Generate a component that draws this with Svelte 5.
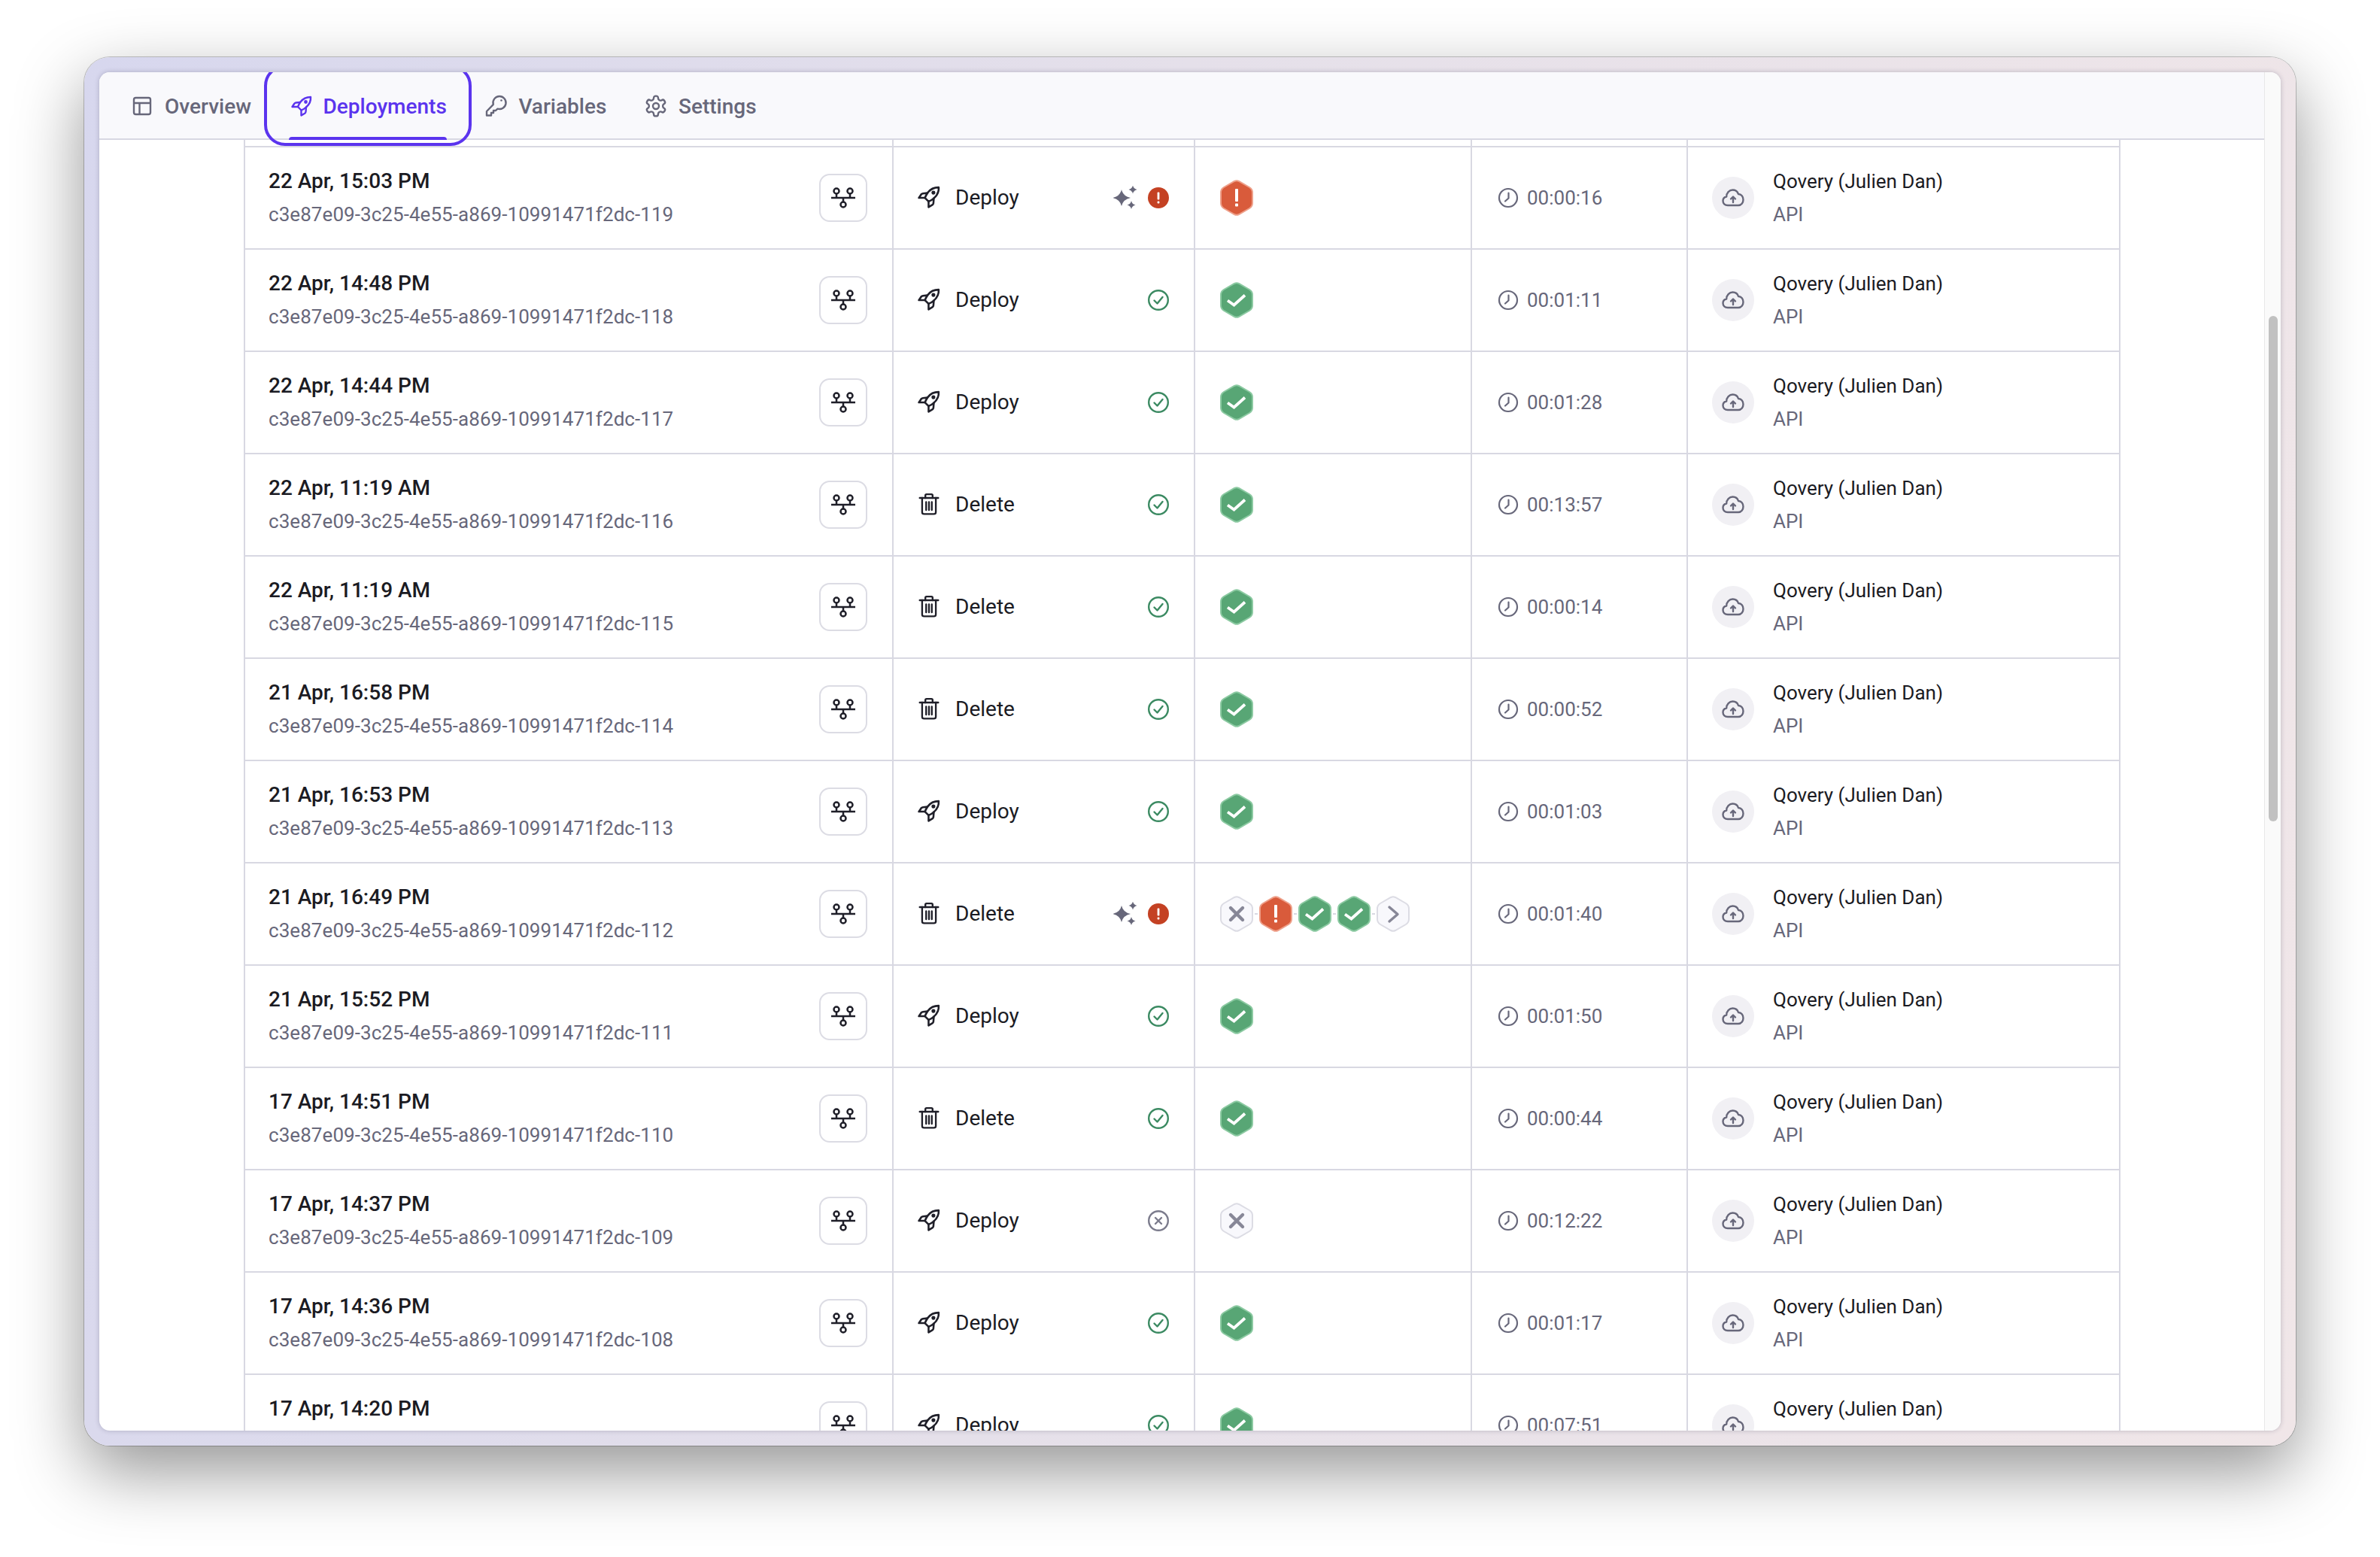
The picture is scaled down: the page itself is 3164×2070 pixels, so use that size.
<script>
  const ID = 'c3e87e09-3c25-4e55-a869-10991471f2dc-';

  const rows = [
    { date: '22 Apr, 15:03 PM', n: 119, action: 'Deploy', status: 'error', time: '00:00:16', ai: true, stages: ['error'] },
    { date: '22 Apr, 14:48 PM', n: 118, action: 'Deploy', status: 'ok', time: '00:01:11', stages: ['ok'] },
    { date: '22 Apr, 14:44 PM', n: 117, action: 'Deploy', status: 'ok', time: '00:01:28', stages: ['ok'] },
    { date: '22 Apr, 11:19 AM', n: 116, action: 'Delete', status: 'ok', time: '00:13:57', stages: ['ok'] },
    { date: '22 Apr, 11:19 AM', n: 115, action: 'Delete', status: 'ok', time: '00:00:14', stages: ['ok'] },
    { date: '21 Apr, 16:58 PM', n: 114, action: 'Delete', status: 'ok', time: '00:00:52', stages: ['ok'] },
    { date: '21 Apr, 16:53 PM', n: 113, action: 'Deploy', status: 'ok', time: '00:01:03', stages: ['ok'] },
    { date: '21 Apr, 16:49 PM', n: 112, action: 'Delete', status: 'error', time: '00:01:40', ai: true, stages: ['cancel', 'error', 'ok', 'ok', 'more'] },
    { date: '21 Apr, 15:52 PM', n: 111, action: 'Deploy', status: 'ok', time: '00:01:50', stages: ['ok'] },
    { date: '17 Apr, 14:51 PM', n: 110, action: 'Delete', status: 'ok', time: '00:00:44', stages: ['ok'] },
    { date: '17 Apr, 14:37 PM', n: 109, action: 'Deploy', status: 'cancel', time: '00:12:22', stages: ['cancel'] },
    { date: '17 Apr, 14:36 PM', n: 108, action: 'Deploy', status: 'ok', time: '00:01:17', stages: ['ok'] },
    { date: '17 Apr, 14:20 PM', n: 107, action: 'Deploy', status: 'ok', time: '00:07:51', stages: ['ok'] }
  ];

  const HEX = 'M19 2 Q22 .5 25 2 L39 10 Q43 12.5 43 17 L43 31 Q43 35.5 39 38 L25 46 Q22 47.5 19 46 L5 38 Q1 35.5 1 31 L1 17 Q1 12.5 5 10 Z';
</script>

{#snippet rocket()}
  <svg class="ico" width="30" height="30" viewBox="0 0 28 28" fill="none" stroke="currentColor" stroke-width="2.4" stroke-linejoin="round" stroke-linecap="round">
    <path d="M26 2 C20.5 2 15.5 4.5 12.5 8.5 C11 10.5 10 12.5 9 15 L13.5 19.5 C16 18.5 18.5 17 20 15.5 C24 12 26.5 7.5 26 2 Z" />
    <path d="M12 9 L6.5 9.5 C5.5 9.6 5 10 4.5 10.5 L1.5 15 L9 15" />
    <path d="M20 15.5 L19.5 21.5 C19.4 22.5 19 23 18.5 23.5 L13.5 26.5 L13.5 19.5" />
    <circle cx="19.5" cy="8.5" r="1.2" fill="currentColor" />
  </svg>
{/snippet}

{#snippet trash()}
  <svg class="ico" width="30" height="30" viewBox="0 0 28 28" fill="none" stroke="currentColor" stroke-width="2.2" stroke-linecap="round" stroke-linejoin="round">
    <path d="M2.5 6.5 H25.5" />
    <path d="M9.5 6.5 V3.5 a1.5 1.5 0 0 1 1.5 -1.5 h6 a1.5 1.5 0 0 1 1.5 1.5 V6.5" />
    <path d="M5.5 6.5 V24 a2.5 2.5 0 0 0 2.5 2.5 h12 a2.5 2.5 0 0 0 2.5 -2.5 V6.5" />
    <path d="M10.5 11.5 V21.5 M14 11.5 V21.5 M17.5 11.5 V21.5" />
  </svg>
{/snippet}

{#snippet status(kind)}
  <svg width="28" height="28" viewBox="0 0 28 28" fill="none">
    {#if kind === 'error'}
      <circle cx="14" cy="14" r="14" fill="#c44123" />
      <rect x="12.6" y="6.5" width="2.8" height="10" rx="1" fill="#fff" />
      <rect x="12.6" y="18.5" width="2.8" height="3" rx="1" fill="#fff" />
    {:else if kind === 'ok'}
      <circle cx="14" cy="14" r="12.8" stroke="#3b8a62" stroke-width="2.4" />
      <path d="M8.5 14.5 L12.5 18.5 L19.5 10" stroke="#3b8a62" stroke-width="2.4" stroke-linecap="round" stroke-linejoin="round" />
    {:else}
      <circle cx="14" cy="14" r="12.8" stroke="#7b7b8c" stroke-width="2.4" />
      <path d="M10 10 L18 18 M18 10 L10 18" stroke="#7b7b8c" stroke-width="2.4" stroke-linecap="round" />
    {/if}
  </svg>
{/snippet}

{#snippet hex(kind)}
  <svg width="44" height="48" viewBox="0 0 44 48" fill="none">
    {#if kind === 'ok'}
      <path d={HEX} fill="#58a675" stroke="#8ccaa2" stroke-width="2" />
      <path d="M10 24.5 L18.5 30.5 L33 17.5" stroke="#fff" stroke-width="3.8" />
    {:else if kind === 'error'}
      <path d={HEX} fill="#d95b3b" stroke="#eea08a" stroke-width="2" />
      <rect x="20" y="12" width="4" height="17" rx="1" fill="#fff" />
      <rect x="20" y="31.5" width="4" height="4" rx="1" fill="#fff" />
    {:else if kind === 'cancel'}
      <path d={HEX} fill="#f8f8fc" stroke="#dcdce4" stroke-width="2" />
      <path d="M14 16 L30 32 M30 16 L14 32" stroke="#878797" stroke-width="4.4" stroke-linecap="round" />
    {:else}
      <path d={HEX} fill="#f8f8fc" stroke="#dcdce4" stroke-width="2" />
      <path d="M17 15 L28 24.5 L17 34" stroke="#878797" stroke-width="3.4" stroke-linecap="round" stroke-linejoin="round" />
    {/if}
  </svg>
{/snippet}

<div class="stage">
  <div class="frame">
    <div class="window">
      <div class="main">
        <nav class="tabs">
          <div class="tab">
            <svg width="32" height="32" viewBox="0 0 32 32" fill="none" stroke="currentColor" stroke-width="2.4">
              <rect x="5" y="5" width="22" height="22" rx="2.5" />
              <path d="M5 12 H27 M12.5 12 V27" />
            </svg>
            Overview
          </div>
          <div class="tab active">
            <svg width="32" height="32" viewBox="-3 -2 32 32" fill="none" stroke="currentColor" stroke-width="2.4" stroke-linejoin="round" stroke-linecap="round">
              <path d="M26 2 C20.5 2 15.5 4.5 12.5 8.5 C11 10.5 10 12.5 9 15 L13.5 19.5 C16 18.5 18.5 17 20 15.5 C24 12 26.5 7.5 26 2 Z" />
              <path d="M12 9 L6.5 9.5 C5.5 9.6 5 10 4.5 10.5 L1.5 15 L9 15" />
              <path d="M20 15.5 L19.5 21.5 C19.4 22.5 19 23 18.5 23.5 L13.5 26.5 L13.5 19.5" />
              <circle cx="19.5" cy="8.5" r="1.2" fill="currentColor" />
            </svg>
            Deployments
          </div>
          <div class="tab">
            <svg width="32" height="32" viewBox="0 0 32 32" fill="none" stroke="currentColor" stroke-width="2.4" stroke-linejoin="round">
              <path d="M21 3 a8.5 8.5 0 1 1 -2.5 16.6 L16 22 H13 V25 H10 V28.5 H4 V23 L12.8 13.8 A8.5 8.5 0 0 1 21 3 Z" />
              <circle cx="23.5" cy="8.5" r="1.3" fill="currentColor" stroke="none" />
            </svg>
            Variables
          </div>
          <div class="tab">
            <svg width="32" height="32" viewBox="0 0 24 24" fill="none" stroke="currentColor" stroke-width="1.8" stroke-linejoin="round">
              <path d="M12.22 2h-.44a2 2 0 0 0-2 2v.18a2 2 0 0 1-1 1.73l-.43.25a2 2 0 0 1-2 0l-.15-.08a2 2 0 0 0-2.73.73l-.22.38a2 2 0 0 0 .73 2.73l.15.1a2 2 0 0 1 1 1.72v.51a2 2 0 0 1-1 1.74l-.15.09a2 2 0 0 0-.73 2.73l.22.38a2 2 0 0 0 2.73.73l.15-.08a2 2 0 0 1 2 0l.43.25a2 2 0 0 1 1 1.73V20a2 2 0 0 0 2 2h.44a2 2 0 0 0 2-2v-.18a2 2 0 0 1 1-1.73l.43-.25a2 2 0 0 1 2 0l.15.08a2 2 0 0 0 2.73-.73l.22-.39a2 2 0 0 0-.73-2.73l-.15-.08a2 2 0 0 1-1-1.74v-.5a2 2 0 0 1 1-1.74l.15-.09a2 2 0 0 0 .73-2.73l-.22-.38a2 2 0 0 0-2.73-.73l-.15.08a2 2 0 0 1-2 0l-.43-.25a2 2 0 0 1-1-1.73V4a2 2 0 0 0-2-2z" />
              <circle cx="12" cy="12" r="3" />
            </svg>
            Settings
          </div>
        </nav>

        <div class="content">
          <div class="table">
            <div class="row stub">
              <div class="cell"></div>
              <div class="cell"></div>
              <div class="cell"></div>
              <div class="cell"></div>
              <div class="cell last"></div>
            </div>
            {#each rows as row}
              <div class="row">
                <div class="cell first">
                  <div class="lines">
                    <div class="primary date">{row.date}</div>
                    <div class="secondary uuid">{ID}{row.n}</div>
                  </div>
                  <div class="net">
                    <svg width="34" height="30" viewBox="0 0 34 30" fill="none" stroke="#1f1f29" stroke-width="2.5">
                      <path d="M1 15 H33 M8 9.5 V15 M26 9.5 V15 M17 15 V20.5" />
                      <circle cx="8" cy="6" r="3.5" />
                      <circle cx="26" cy="6" r="3.5" />
                      <circle cx="17" cy="24" r="3.5" />
                    </svg>
                  </div>
                </div>
                <div class="cell action">
                  {#if row.action === 'Deploy'}
                    {@render rocket()}
                  {:else}
                    {@render trash()}
                  {/if}
                  <span class="action-name">{row.action}</span>
                  <div class="state">
                    {#if row.ai}
                      <svg width="32" height="32" viewBox="0 0 32 32" fill="#67677a">
                        <path d="M11 5 Q13 14 23 16 Q13 18 11 27 Q9 18 -1 16 Q9 14 11 5 Z" />
                        <path d="M26 -.5 Q27 4 31.5 5 Q27 6 26 10.5 Q25 6 20.5 5 Q25 4 26 -.5 Z" />
                        <path d="M24 20 Q25 24.500 29.500 25.500 Q25 26.500 24 31 Q23 26.500 18.500 25.500 Q23 24.500 24 20 Z" />
                      </svg>
                    {/if}
                    {@render status(row.status)}
                  </div>
                </div>
                <div class="cell stages">
                  {#each row.stages as stage, i}
                    {#if i > 0}<span class="dash"></span>{/if}
                    {@render hex(stage)}
                  {/each}
                </div>
                <div class="cell duration">
                  <svg width="28" height="28" viewBox="0 0 28 28" fill="none" stroke="#67677a" stroke-width="2.2" stroke-linecap="round" stroke-linejoin="round">
                    <circle cx="14" cy="14" r="12" />
                    <path d="M14.5 7.5 V14.5 L10 18.5" />
                  </svg>
                  <span>{row.time}</span>
                </div>
                <div class="cell last author">
                  <div class="avatar">
                    <svg width="30" height="24" viewBox="0 0 30 24" fill="none" stroke="#67677a" stroke-width="2.4" stroke-linejoin="round" stroke-linecap="round">
                      <path d="M8 22 C4 22 1.5 19.5 1.5 16 C1.5 13 3.5 11 6.2 10.5 C6.2 5.5 10 1.5 14.5 1.5 C18.5 1.5 21 3.8 22 7 C26 7 28.5 10.5 28.5 14.5 C28.5 18.5 26 22 22 22 Z" />
                      <path d="M15 18 V11 M12 13.5 L15 10.5 L18 13.5" />
                    </svg>
                  </div>
                  <div class="lines">
                    <div class="primary">Qovery (Julien Dan)</div>
                    <div class="secondary">API</div>
                  </div>
                </div>
              </div>
            {/each}
          </div>
        </div>
      </div>
      <div class="scrollbar"><div class="thumb"></div></div>
    </div>
  </div>
</div>

<style>
  :global(body) {
    margin: 0;
    background: #fff;
    overflow: hidden;
  }

  .stage {
    box-sizing: border-box;
    width: 3164px;
    height: 2070px;
    padding: 76px 112px 148px;
    font-family: Roboto, "Liberation Sans", sans-serif;
    color: #1b1b23;
  }

  .frame {
    box-sizing: border-box;
    height: 100%;
    padding: 20px;
    border-radius: 34px;
    background: linear-gradient(100deg, #d7d7ee 0%, #e5e0ea 45%, #f0e6e8 100%);
    box-shadow: 0 0 0 1px rgba(0, 0, 0, 0.22), 0 34px 90px rgba(0, 0, 0, 0.42);
  }

  .window {
    display: flex;
    height: 100%;
    overflow: hidden;
    border-radius: 14px;
    background: #fff;
    box-shadow: 0 0 6px rgba(40, 40, 70, 0.25);
  }

  .main {
    flex: 1;
    min-width: 0;
    display: flex;
    flex-direction: column;
  }

  .tabs {
    position: relative;
    z-index: 2;
    flex: none;
    display: flex;
    gap: 49.6px;
    height: 88px;
    padding-left: 41px;
    background: #f9f9fc;
    border-bottom: 2px solid #d8d8e2;
  }

  .tab {
    position: relative;
    display: flex;
    align-items: center;
    gap: 14px;
    padding-top: 2px;
    font-size: 28px;
    font-weight: 500;
    color: #67677a;
  }

  .tab.active {
    color: #5b34ee;
  }

  /* focus ring, it hangs over the table below */
  .tab.active::before {
    content: "";
    position: absolute;
    inset: -10px -33px -10px -33px;
    border: 4px solid #5b34ee;
    border-radius: 28px;
  }

  .tab.active::after {
    content: "";
    position: absolute;
    left: 0;
    right: 0;
    bottom: -2px;
    height: 4px;
    border-radius: 4px 4px 0 0;
    background: #5b34ee;
  }

  .content {
    flex: 1;
    min-height: 0;
    overflow: hidden;
    padding-left: 192px;
  }

  .table {
    width: 2495px;
    box-sizing: border-box;
    border-left: 2px solid #d8d8e2;
    border-right: 2px solid #d8d8e2;
  }

  .row {
    display: grid;
    grid-template-columns: 862px 401px 368px 287px 573px;
    height: 136px;
    box-sizing: border-box;
    border-top: 2px solid #d8d8e2;
  }

  .row.stub {
    height: 8px;
    border-top: 0;
  }

  .cell {
    display: flex;
    align-items: center;
    min-width: 0;
    box-sizing: border-box;
    border-right: 2px solid #d8d8e2;
  }

  .cell.last {
    border-right: 0;
  }

  .first {
    justify-content: space-between;
    padding: 0 33px 0 31px;
  }

  .lines {
    display: flex;
    flex-direction: column;
    gap: 10px;
  }

  .primary {
    font-size: 26px;
    line-height: 34px;
    color: #1b1b23;
  }

  .primary.date {
    font-size: 28px;
    font-weight: 500;
  }

  .secondary {
    font-size: 26px;
    line-height: 34px;
    color: #67677a;
  }

  .uuid {
    letter-spacing: 0.06px;
  }

  .net {
    display: flex;
    align-items: center;
    justify-content: center;
    width: 64px;
    height: 64px;
    box-sizing: border-box;
    border: 2px solid #dcdce4;
    border-radius: 14px;
  }

  .action {
    padding: 0 33px 2px 32px;
    color: #1f1f29;
  }

  .ico {
    flex: none;
  }

  .action-name {
    margin-left: 20px;
    font-size: 28px;
    color: #1b1b23;
  }

  .state {
    display: flex;
    align-items: center;
    gap: 14px;
    margin: 2px 0 0 auto;
  }

  .stages {
    padding-left: 33px;
  }

  .dash {
    width: 4px;
    height: 2px;
    margin: 0 2px;
    background: #d8d8e2;
  }

  .duration {
    gap: 11px;
    padding-left: 34px;
    font-size: 26px;
    color: #67677a;
  }

  .author {
    gap: 25px;
    padding-left: 32px;
  }

  .avatar {
    display: flex;
    align-items: center;
    justify-content: center;
    width: 56px;
    height: 56px;
    border-radius: 50%;
    background: #f1f0f4;
  }

  .scrollbar {
    flex: none;
    box-sizing: border-box;
    width: 22px;
    padding: 324px 4px 0 5px;
    background: #fafafa;
    border-left: 1px solid #e8e8e8;
  }

  .thumb {
    height: 672px;
    border-radius: 6px;
    background: #c1c1c1;
  }
</style>
